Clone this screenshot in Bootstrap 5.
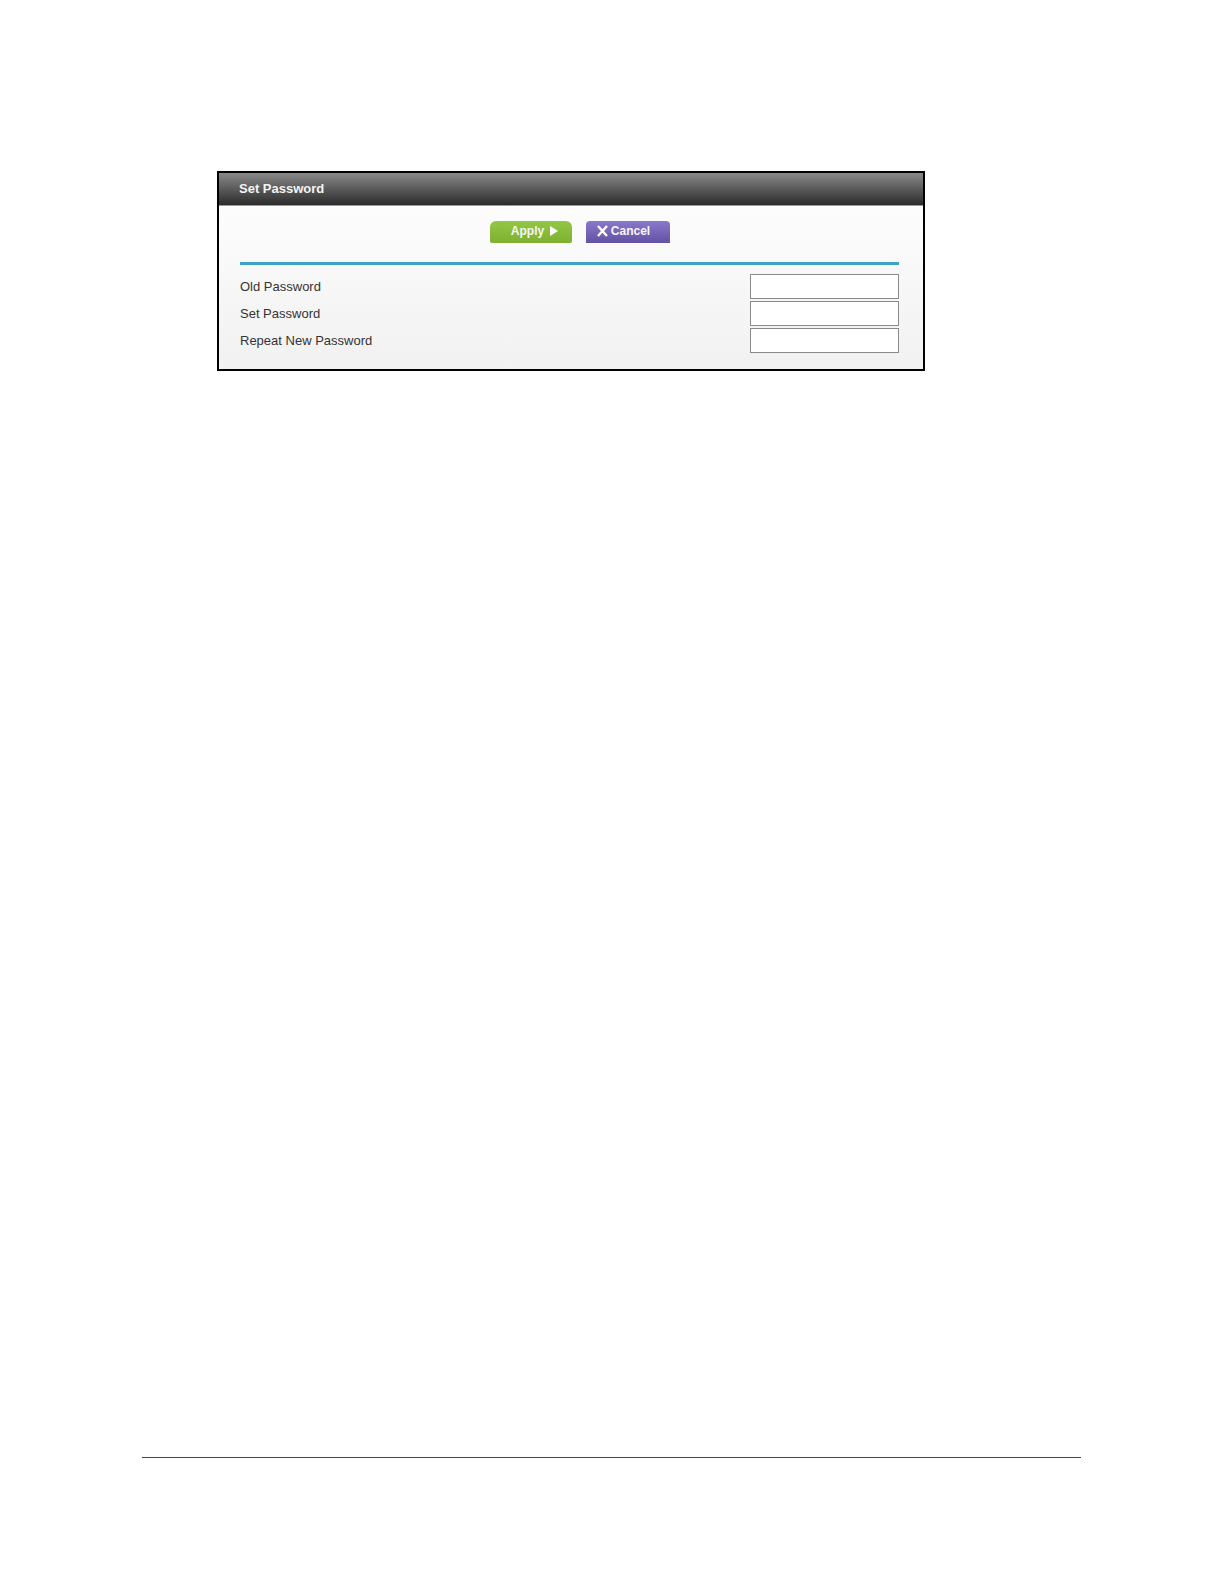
<!DOCTYPE html>
<html lang="en">
<head>
    <meta charset="UTF-8">
    <meta name="viewport" content="width=device-width, initial-scale=1.0">
    <title>Set Password</title>
    <link rel="stylesheet" href="https://cdn.jsdelivr.net/npm/bootstrap@5.3.2/dist/css/bootstrap.min.css">
    <style>
        body {
            font-family: "Liberation Sans", Arial, sans-serif;
            font-size: 13px;
            line-height: 16px;
            color: #333;
        }
        .page {
            padding: 171px 143px 126px 142px;
        }
        .panel {
            margin: 0 156px 0 75px;
            border: 2px solid #000;
            border-radius: 0;
            background: linear-gradient(#fff, #f1f1f1);
        }
        .panel-title {
            height: 33px;
            padding: 0 20px;
            border: 0;
            border-bottom: 1px solid #999;
            border-radius: 0 !important;
            background: linear-gradient(#898989, #2b2b2b);
            color: #f4f4f4;
        }
        .panel-title h1 {
            font-size: 13px;
            line-height: 16px;
        }
        .panel-content {
            padding: 15px 24px 16px 21px;
        }
        .toolbar {
            gap: 14px;
            padding: 0 0 19px 20px;
            border-bottom: 3px solid #3fa3c8;
        }
        .btn-tool {
            height: 22px;
            padding: 0 0 2px;
            border: 0;
            border-radius: 6px 6px 2px 2px;
            font-size: 12px;
            line-height: 16px;
            font-weight: bold;
            color: #f6f6f6;
        }
        .btn-apply {
            width: 82px;
            gap: 6px;
            padding-left: 8px;
            background: linear-gradient(#94c744, #7fb031);
        }
        .btn-cancel {
            width: 84px;
            gap: 3px;
            padding-right: 8px;
            border-radius: 4px 4px 0 0;
            background: linear-gradient(#8a79ca, #6352a3);
        }
        .fields {
            gap: 2px;
            padding-top: 9px;
        }
        .fields .form-control {
            width: 149px;
            height: 25px;
            padding: 2px 4px;
            border: 1px solid #8a8a8a;
            border-radius: 0;
            font-size: 13px;
            line-height: 16px;
        }
        .page-rule {
            border-top: 1px solid #5c3375;
        }
    </style>
</head>
<body class="bg-white">
    <div class="page min-vh-100 d-flex flex-column">
        <main class="flex-grow-1">
            <form class="card panel" id="password-form">
                <div class="card-header panel-title d-flex align-items-center">
                    <h1 class="fw-bold m-0">Set Password</h1>
                </div>
                <div class="card-body panel-content">
                    <div class="toolbar d-flex justify-content-center">
                        <button type="submit" class="btn btn-tool btn-apply d-flex align-items-center justify-content-center">
                            Apply
                            <svg width="8" height="10" viewBox="0 0 8 10" aria-hidden="true"><path d="M0 0L8 5L0 10Z" fill="#fff"/></svg>
                        </button>
                        <button type="reset" class="btn btn-tool btn-cancel d-flex align-items-center justify-content-center">
                            <svg width="11" height="12" viewBox="0 0 11 12" aria-hidden="true"><path d="M1 1L10 11M10 1L1 11" stroke="#fff" stroke-width="2.4"/></svg>
                            Cancel
                        </button>
                    </div>
                    <div class="fields d-flex flex-column">
                        <div class="d-flex align-items-center justify-content-between">
                            <label for="old-password">Old Password</label>
                            <input type="password" id="old-password" class="form-control">
                        </div>
                        <div class="d-flex align-items-center justify-content-between">
                            <label for="new-password">Set Password</label>
                            <input type="password" id="new-password" class="form-control">
                        </div>
                        <div class="d-flex align-items-center justify-content-between">
                            <label for="repeat-password">Repeat New Password</label>
                            <input type="password" id="repeat-password" class="form-control">
                        </div>
                    </div>
                </div>
            </form>
        </main>
        <footer class="page-rule"></footer>
    </div>

    <script>
        document.getElementById("password-form").addEventListener("submit", function(event) {
            event.preventDefault();
        });
    </script>

    <script src="https://cdn.jsdelivr.net/npm/bootstrap@5.3.2/dist/js/bootstrap.bundle.min.js"></script>
</body>
</html>
